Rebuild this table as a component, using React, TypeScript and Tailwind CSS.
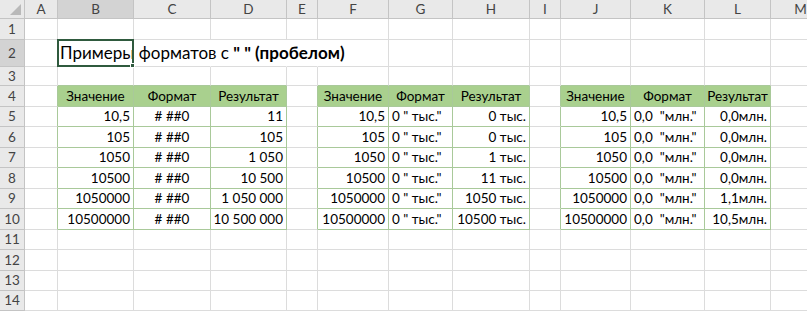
import React from "react";

type Cell = { text?: React.ReactNode; align?: "l" | "c" | "r"; kind?: "head" | "data" };

const letters = ["A", "B", "C", "D", "E", "F", "G", "H", "I", "J", "K", "L", "M"];
const tableCols = [[1, 2, 3], [5, 6, 7], [9, 10, 11]]; // B-D, F-H, J-L (0-based from A)
const heads = ["Значение", "Формат", "Результат"];
const values = ["10,5", "105", "1050", "10500", "1050000", "10500000"];

const results = [
  ["11", "105", "1 050", "10 500", "1 050 000", "10 500 000"],
  ["0 тыс.", "0 тыс.", "1 тыс.", "11 тыс.", "1050 тыс.", "10500 тыс."],
  ["0,0млн.", "0,0млн.", "0,0млн.", "0,0млн.", "1,1млн.", "10,5млн."],
];
const formats = ["# ##0", '0 " тыс."', '0,0\u00a0\u00a0"млн."'];

function cellAt(row: number, col: number): Cell {
  for (let t = 0; t < 3; t++) {
    const idx = tableCols[t].indexOf(col);
    if (idx < 0) continue;
    if (row === 4) return { text: heads[idx], align: "c", kind: "head" };
    if (row >= 5 && row <= 10) {
      const r = row - 5;
      if (idx === 0) return { text: values[r], align: "r", kind: "data" };
      if (idx === 1) return { text: formats[t], align: t === 0 ? "c" : "l", kind: "data" };
      return { text: results[t][r], align: "r", kind: "data" };
    }
  }
  return {};
}

const inTable = (row: number, col: number) =>
  row >= 4 && row <= 10 && tableCols.some((c) => c.includes(col));

export default function App() {
  const rows = Array.from({ length: 14 }, (_, i) => i + 1);

  return (
    <div className="w-[807px] h-[311px] overflow-hidden bg-white font-['Lato',sans-serif] text-[13.5px] text-black">
      <div className="grid grid-cols-[25px_33px_76px_77px_76px_31px_71px_64px_77px_31px_70px_74px_66px_60px] grid-rows-[19px_21px_27px_19px_21px_20px_21px_20px_21px_20px_21px_20px_21px_20px_20px]">
        {/* corner */}
        <div className="relative bg-[#e9e9e9] border-r border-b border-[#c4c4c4]">
          <svg className="absolute right-[3px] bottom-[3px]" width="11" height="11" viewBox="0 0 11 11">
            <polygon points="11,0 11,11 0,11" fill="#b9b9b9" />
          </svg>
        </div>
        {letters.map((l, i) => (
          <div
            key={l}
            className={`flex items-center justify-center border-r border-b border-[#c4c4c4] text-[#444] ${
              i === 1 ? "bg-[#d3d3d3]" : "bg-[#e9e9e9]"
            }`}
          >
            {l}
          </div>
        ))}

        {rows.map((row) => (
          <React.Fragment key={row}>
            <div
              className={`flex items-center justify-center border-r border-b border-[#c4c4c4] text-[#444] ${
                row === 2 ? "bg-[#d3d3d3]" : "bg-[#e9e9e9]"
              }`}
            >
              {row}
            </div>
            {letters.map((_, col) => {
              if (row === 2 && col === 1) {
                return (
                  <div key={col} className="relative z-10 flex items-center whitespace-nowrap pl-[2px] border-b border-[#dcdcdc]">
                    <span className="text-[17px]">
                      Примеры форматов с <b>" " (пробелом)</b>
                    </span>
                    <div className="absolute -left-px -top-px w-[77px] h-[28px] border-2 border-[#2f5a3e]" />
                    <div className="absolute left-[72px] top-[23px] w-[5px] h-[5px] bg-[#2f5a3e] border border-white" />
                  </div>
                );
              }
              const c = cellAt(row, col);
              const table = inTable(row, col);
              const nextInTable = inTable(row, col + 1);
              const belowInTable = inTable(row + 1, col);
              const hideRight = row === 2 && col >= 2 && col <= 4;
              const rightColor = table || nextInTable ? "border-r-[#a9c99a]" : hideRight ? "border-r-transparent" : "border-r-[#dcdcdc]";
              const bottomColor = table || belowInTable ? "border-b-[#a9c99a]" : "border-b-[#dcdcdc]";
              const align =
                c.align === "r" ? "justify-end pr-[3px]" : c.align === "c" ? "justify-center" : "justify-start pl-[3px]";
              return (
                <div
                  key={col}
                  className={`flex items-center whitespace-nowrap overflow-hidden border-r border-b ${rightColor} ${bottomColor} ${align} ${
                    c.kind === "head" ? "bg-[#a9d08e]" : ""
                  }`}
                >
                  {c.text}
                </div>
              );
            })}
          </React.Fragment>
        ))}
      </div>
    </div>
  );
}
